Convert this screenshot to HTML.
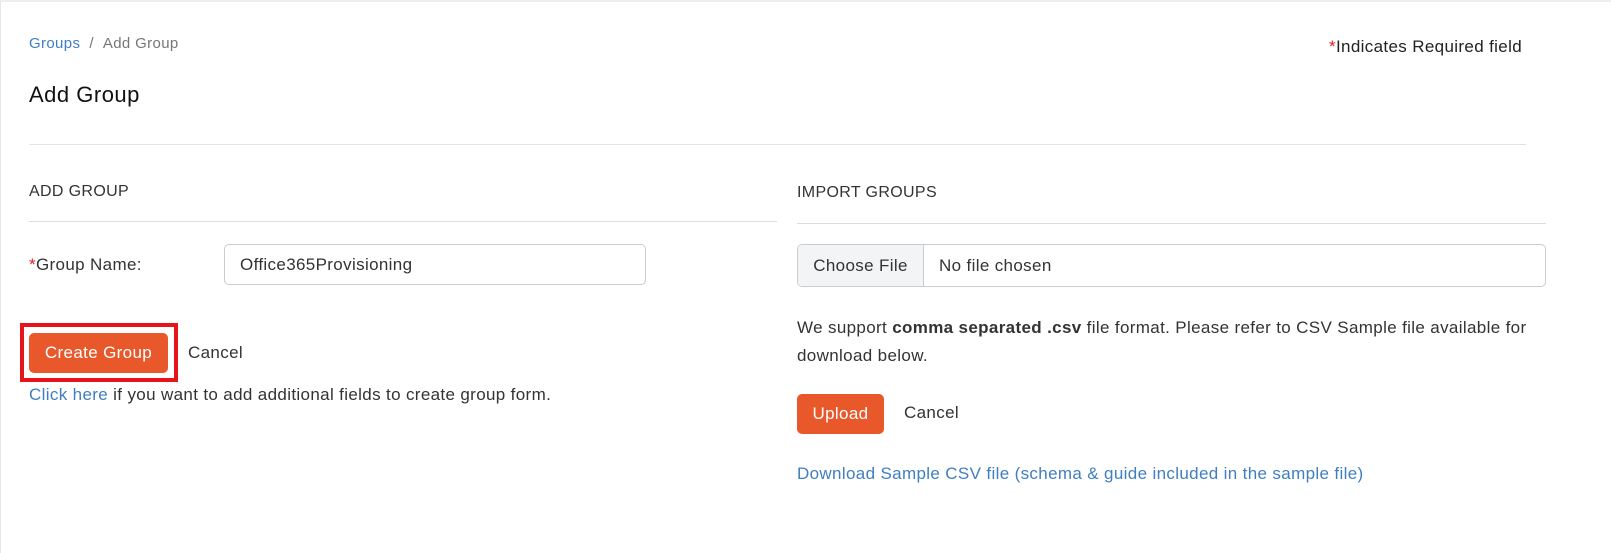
<!DOCTYPE html>
<html><head><style>
*{box-sizing:border-box;margin:0;padding:0}
body{width:1611px;height:553px;background:#fff;font-family:"Liberation Sans",sans-serif;color:#222;position:relative;overflow:hidden;border-top:2px solid #eee;border-left:1px solid #e6e6e6;letter-spacing:0.35px}
.a{position:absolute;white-space:nowrap}
.blue{color:#3f7fbf}
.req{color:#e02020}
.hr{position:absolute;height:1px;background:#ddd}
.btn{position:absolute;background:#e8582a;color:#fff;border-radius:5px;font-size:17px;display:flex;align-items:center;justify-content:center}
</style></head><body>
<div class="a" style="left:28px;top:33px;font-size:15px"><span class="blue">Groups</span><span style="color:#777">&nbsp; / &nbsp;Add Group</span></div>
<div class="a" style="left:1328px;top:35px;font-size:17px"><span class="req">*</span>Indicates Required field</div>
<div class="a" style="left:28px;top:80px;font-size:22px;color:#111;letter-spacing:0.5px">Add Group</div>
<div class="hr" style="left:28px;top:142px;width:1497px;background:#e3e3e3"></div>
<div class="a" style="left:28px;top:181px;font-size:16px;color:#333">ADD GROUP</div>
<div class="hr" style="left:28px;top:219px;width:748px"></div>
<div class="a" style="left:28px;top:253px;font-size:17px;color:#333"><span class="req">*</span>Group Name:</div>
<div style="position:absolute;left:223px;top:242px;width:422px;height:41px;border:1px solid #ccc;border-radius:5px;padding:0 15px;display:flex;align-items:center;font-size:17px;color:#333">Office365Provisioning</div>
<div style="position:absolute;left:19px;top:321px;width:158px;height:59px;border:4px solid #e8141c"></div>
<div class="btn" style="left:28px;top:331px;width:139px;height:40px">Create Group</div>
<div class="a" style="left:187px;top:341px;font-size:17px;color:#333">Cancel</div>
<div class="a" style="left:28px;top:383px;font-size:17px;color:#333"><span class="blue">Click here</span> if you want to add additional fields to create group form.</div>

<div class="a" style="left:796px;top:182px;font-size:16px;color:#333">IMPORT GROUPS</div>
<div class="hr" style="left:796px;top:221px;width:749px"></div>
<div style="position:absolute;left:796px;top:242px;width:749px;height:43px;border:1px solid #ccc;border-radius:5px;display:flex;font-size:17px;color:#333;overflow:hidden">
<div style="width:126px;background:#f3f4f6;border-right:1px solid #ccc;display:flex;align-items:center;justify-content:center">Choose File</div>
<div style="display:flex;align-items:center;padding-left:15px">No file chosen</div></div>
<div class="a" style="left:796px;top:312px;font-size:17px;line-height:28px;color:#333;white-space:normal;width:745px">We support <b>comma separated .csv</b> file format. Please refer to CSV Sample file available for download below.</div>
<div class="btn" style="left:796px;top:392px;width:87px;height:40px">Upload</div>
<div class="a" style="left:903px;top:401px;font-size:17px;color:#333">Cancel</div>
<div class="a blue" style="left:796px;top:462px;font-size:17px">Download Sample CSV file (schema &amp; guide included in the sample file)</div>
</body></html>
